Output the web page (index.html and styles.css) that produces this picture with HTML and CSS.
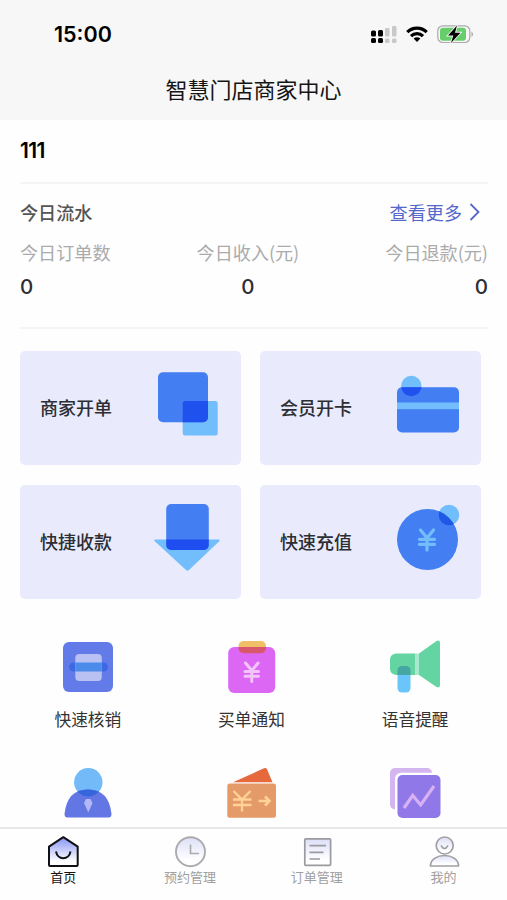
FILE: index.html
```html
<!DOCTYPE html>
<html lang="zh-CN">
<head>
<meta charset="utf-8">
<title>智慧门店商家中心</title>
<link rel="stylesheet" href="styles.css">
</head>
<body>
<header class="header">
  <div class="status">
    <span class="time">15:00</span>
    <svg class="status-icons" width="104" height="24" viewBox="370 22 104 24">
      <g fill="#000"><rect x="371" y="30.500" width="5" height="6" rx="1.500"/><rect x="378" y="30" width="5" height="6.500" rx="1.500"/><rect x="371" y="38" width="5" height="5" rx="1.500"/><rect x="378" y="38" width="5" height="5" rx="1.500"/></g>
      <g fill="#c9c9c9"><rect x="385" y="28" width="4.500" height="8.500" rx="1"/><rect x="392" y="26" width="4.500" height="10.500" rx="1"/><rect x="385" y="38.500" width="4.500" height="4.500" rx="1.200"/><rect x="392" y="38.500" width="4.500" height="4.500" rx="1.200"/></g>
      <g fill="none" stroke="#000" stroke-width="3.200"><path d="M407.300 32.200a13.800 13.800 0 0 1 19.400 0"/><path d="M411 36.200a8.500 8.500 0 0 1 12 0"/></g>
      <path d="M417 42l-3.400-3.400a4.900 4.900 0 0 1 6.800 0z" fill="#000"/>
      <rect x="437.800" y="25.800" width="32" height="16.700" rx="5" fill="#f7f7f7" stroke="#aaa" stroke-width="1.200"/>
      <rect x="440" y="27.700" width="26" height="13" rx="3" fill="#68ce6c"/>
      <path d="M471.500 31.500q3 2.700 0 5.500z" fill="#aaa"/>
      <path d="M457 25.500l-9 10h5.300l-2.300 7.500 9.500-10.300H455z" fill="#000" stroke="#f7f7f7" stroke-width="1.800" paint-order="stroke"/>
    </svg>
  </div>
  <h1 class="title">智慧门店商家中心</h1>
</header>

<main class="main">
  <section class="summary">
    <div class="store">111</div>
    <div class="flow-head">
      <span class="flow-title">今日流水</span>
      <a class="more">查看更多<svg width="12" height="20" viewBox="0 0 12 20"><path d="M1.500 2l8 8-8 8" fill="none" stroke="#5468cc" stroke-width="1.800"/></svg></a>
    </div>
    <div class="stats">
      <div class="stat"><span>今日订单数</span><b>0</b></div>
      <div class="stat stat-mid"><span>今日收入(元)</span><b>0</b></div>
      <div class="stat stat-end"><span>今日退款(元)</span><b>0</b></div>
    </div>
  </section>

  <section class="cards">
    <div class="card"><span>商家开单</span>
      <svg width="80" height="80" viewBox="0 0 80 80">
        <clipPath id="sq"><rect x="8" y="4.300" width="50" height="50" rx="5"/></clipPath>
        <rect x="32.700" y="33" width="35" height="34.500" rx="2.500" fill="#72bdfb"/>
        <rect x="8" y="4.300" width="50" height="50" rx="5" fill="#437ef2"/>
        <rect x="32.700" y="33" width="35" height="34.500" rx="2.500" fill="#1e51ee" clip-path="url(#sq)"/>
      </svg></div>
    <div class="card"><span>会员开卡</span>
      <svg width="80" height="80" viewBox="0 0 80 80">
        <clipPath id="cd"><rect x="7" y="19.300" width="62" height="45.200" rx="5"/></clipPath>
        <circle cx="21.300" cy="18" r="10.200" fill="#72bdfb"/>
        <rect x="7" y="19.300" width="62" height="45.200" rx="5" fill="#437ef2"/>
        <circle cx="21.300" cy="18" r="10.200" fill="#1e51ee" clip-path="url(#cd)"/>
        <rect x="7" y="34.500" width="62" height="6.700" fill="#72bdfb"/>
      </svg></div>
    <div class="card"><span>快捷收款</span>
      <svg width="80" height="80" viewBox="0 0 80 80">
        <clipPath id="ar"><rect x="16.200" y="2" width="42.600" height="46" rx="5"/></clipPath>
        <path d="M5.500 37.500h63q2 .4.700 1.800L39 68q-1.500 1.300-3 0L4.800 39.300q-1.300-1.400.7-1.800z" fill="#72bdfb"/>
        <rect x="16.200" y="2" width="42.600" height="46" rx="5" fill="#437ef2"/>
        <rect x="16.200" y="37.500" width="42.600" height="10.500" fill="#1e4df0" clip-path="url(#ar)"/>
      </svg></div>
    <div class="card"><span>快速充值</span>
      <svg width="80" height="80" viewBox="0 0 80 80">
        <clipPath id="co"><circle cx="37.500" cy="37.500" r="30.500"/></clipPath>
        <circle cx="59" cy="13" r="10.300" fill="#72bdfb"/>
        <circle cx="37.500" cy="37.500" r="30.500" fill="#437ef2"/>
        <circle cx="59" cy="13" r="10.300" fill="#1e58e6" clip-path="url(#co)"/>
        <path d="M30.500 28l6.500 8 6.500-8M29.500 37.300h15M29.500 42.300h15M37 36v12" fill="none" stroke="#72bdfb" stroke-width="3.300" stroke-linecap="round"/>
      </svg></div>
  </section>

  <section class="services">
    <div class="service">
      <svg width="60" height="60" viewBox="0 0 60 60">
        <rect x="5" y="5" width="50" height="50" rx="6" fill="#637be9"/>
        <rect x="11" y="25.500" width="39" height="9" rx="4.500" fill="#3e69e3"/>
        <rect x="17.300" y="17" width="26.500" height="27" rx="4" fill="#b9c0f2"/>
        <rect x="17.300" y="25.500" width="26.500" height="9" fill="#4b8bea"/>
      </svg><span>快速核销</span></div>
    <div class="service">
      <svg width="60" height="60" viewBox="0 0 60 60">
        <clipPath id="bl"><rect x="7.200" y="10" width="47" height="46" rx="6"/></clipPath>
        <rect x="17.500" y="4" width="27.500" height="12.300" rx="5" fill="#f1bf68"/>
        <rect x="7.200" y="10" width="47" height="46" rx="6" fill="#dd67f5"/>
        <rect x="17.500" y="4" width="27.500" height="12.300" rx="5" fill="#d9576c" clip-path="url(#bl)"/>
        <path d="M24.500 26l6.300 7.500 6.300-7.500M24 34.500h13.500M24 39.300h13.500M30.800 33v11.500" fill="none" stroke="#f3c4f8" stroke-width="3" stroke-linecap="round"/>
      </svg><span>买单通知</span></div>
    <div class="service">
      <svg width="60" height="60" viewBox="0 0 60 60">
        <clipPath id="mg"><rect x="5" y="16.500" width="26" height="21.500" rx="6"/></clipPath>
        <rect x="12.500" y="29" width="13" height="26.500" rx="4.500" fill="#69c5fa"/>
        <path d="M11 16.500h19.500V38H11q-6-1-6-6V22.500q0-5 6-6z" fill="#63d4a2"/>
        <rect x="30.500" y="16.500" width="3.500" height="21.500" fill="#a8e8cc"/>
        <path d="M34 16.500L51.500 4q3.500-1.500 3.500 2v42q0 3.500-3.500 2L34 38z" fill="#63d4a2"/>
        <rect x="12.500" y="29" width="13" height="26.500" rx="4.500" fill="#46a6a3" clip-path="url(#mg)"/>
      </svg><span>语音提醒</span></div>
    <div class="service">
      <svg width="60" height="60" viewBox="0 0 60 60">
        <clipPath id="bd"><path d="M6.500 50Q9 25.500 30 25.500T53.500 50q0 3.500-3 3.500h-41q-3 0-3-3.500z"/></clipPath>
        <circle cx="30.300" cy="18.200" r="14.200" fill="#72bbf8"/>
        <path d="M6.500 50Q9 25.500 30 25.500T53.500 50q0 3.500-3 3.500h-41q-3 0-3-3.500z" fill="#6277e3"/>
        <circle cx="30.300" cy="18.200" r="14.200" fill="#3765dc" clip-path="url(#bd)"/>
        <path d="M28 35h4.500l2 4-4.200 9.500L26 39z" fill="#b2b9f6"/>
      </svg></div>
    <div class="service">
      <svg width="60" height="60" viewBox="0 0 60 60">
        <path d="M12 18.200L43 4.300q2-.8 3 1l5.500 12.900z" fill="#e6683d"/>
        <rect x="6.300" y="19.500" width="48.700" height="34.300" rx="2.500" fill="#e59a6a"/>
        <path d="M12.500 27l8.500 8.500 8.500-8.500M12 35.500h18.500M12 41h18.500M21 35v12.500" fill="none" stroke="#ffd298" stroke-width="2.300"/>
        <path d="M37.500 37h10M44 32.500l4.500 4.500-4.500 4.500" fill="none" stroke="#ffd298" stroke-width="2.700"/>
      </svg></div>
    <div class="service">
      <svg width="60" height="60" viewBox="0 0 60 60">
        <rect x="5" y="4" width="42" height="41.500" rx="5" fill="#d3b5ef"/>
        <rect x="10" y="8.700" width="48" height="48" rx="6" fill="#fff"/>
        <rect x="12.500" y="11" width="43" height="43" rx="5" fill="#9078e9"/>
        <path d="M19 44l8.700-12.500L35.700 41 49 22" fill="none" stroke="#d7b1f3" stroke-width="3.200"/>
      </svg></div>
  </section>
</main>

<nav class="tabs">
  <a class="tab active">
    <svg width="36" height="36" viewBox="0 0 36 36">
      <linearGradient id="g1" x2="0" y2="1"><stop stop-color="#8794f4"/><stop offset=".85" stop-color="#fff"/></linearGradient>
      <path d="M18.300 4.200L32.700 13.700V32q0 1-1 1H5q-1 0-1-1V13.700z" fill="url(#g1)" stroke="#101015" stroke-width="2" stroke-linejoin="round"/>
      <path d="M11 18.500c1.500 9 13 9 14.500 0" fill="none" stroke="#101015" stroke-width="2"/>
    </svg><span>首页</span></a>
  <a class="tab">
    <svg width="36" height="36" viewBox="0 0 36 36">
      <linearGradient id="g2" x2="0" y2="1"><stop stop-color="#dcdff8"/><stop offset=".8" stop-color="#fff"/></linearGradient>
      <circle cx="18.500" cy="18.700" r="14.500" fill="url(#g2)" stroke="#ababaf" stroke-width="1.900"/>
      <path d="M18.500 11.500V20.500H27" fill="none" stroke="#ababaf" stroke-width="1.700"/>
    </svg><span>预约管理</span></a>
  <a class="tab">
    <svg width="36" height="36" viewBox="0 0 36 36">
      <rect x="5.800" y="5.800" width="25.800" height="26.500" rx="1" fill="url(#g2)" stroke="#9b9b9f" stroke-width="1.700"/>
      <path d="M10.500 12.700h16.500M10.500 19.300h14M10.500 26h10.500" stroke="#9b9b9f" stroke-width="1.700"/>
    </svg><span>订单管理</span></a>
  <a class="tab">
    <svg width="36" height="36" viewBox="0 0 36 36">
      <path d="M4.500 33c0-14 28-14 28 0z" fill="url(#g2)" stroke="#a0a0a4" stroke-width="1.700" stroke-linejoin="round"/>
      <circle cx="18.700" cy="12.500" r="8.500" fill="url(#g2)" stroke="#a0a0a4" stroke-width="1.700"/>
      <path d="M15 12.500q3.500 6 7 0" fill="none" stroke="#a0a0a4" stroke-width="1.600"/>
    </svg><span>我的</span></a>
</nav>
</body>
</html>
```
FILE: styles.css
```css
* { box-sizing: border-box; }
body {
  margin: 0;
  height: 900px;
  display: flex;
  flex-direction: column;
  overflow: hidden;
  background: #fefefe;
  font-family: Inter, "Noto Sans CJK SC", sans-serif;
  color: #2d2e33;
}
svg { display: block; flex: none; }
.header { height: 120px; flex: none; background: #f7f7f7; }
.status {
  height: 68px;
  padding: 0 33px 0 54px;
  display: flex;
  align-items: center;
  justify-content: space-between;
}
.time { font-size: 21.5px; font-weight: 600; color: #000; }
.title {
  margin: 0;
  font-size: 22px;
  line-height: 44px;
  font-weight: 400;
  text-align: center;
  color: #151515;
}
.main { flex: 1; min-height: 0; overflow: hidden; }
.summary {
  height: 209px;
  margin: 0 19px 0 20px;
  border-bottom: 2px solid #f5f5f6;
}
.store {
  height: 64px;
  line-height: 62px;
  border-bottom: 2px solid #f5f5f6;
  font-size: 21px;
  font-weight: 600;
  letter-spacing: -0.6px;
  color: #000;
}
.flow-head {
  height: 55px;
  padding-right: 7px;
  display: flex;
  align-items: center;
  justify-content: space-between;
  font-size: 18.1px;
}
.flow-title { font-weight: 500; color: #555; }
.more { display: flex; align-items: center; gap: 7px; color: #5468cc; }
.stats { display: flex; justify-content: space-between; }
.stat { display: flex; flex-direction: column; line-height: 26px; }
.stat span { font-family: "Noto Sans CJK SC", sans-serif; font-size: 18.1px; color: #ababab; }
.stat b { margin-top: 9px; font-size: 20.5px; font-weight: 500; }
.stat-mid { text-align: center; }
.stat-end { text-align: right; }
.cards {
  padding: 22px 26px 0 20px;
  display: grid;
  grid-template-columns: 1fr 1fr;
  grid-auto-rows: 114px;
  gap: 20px 19px;
}
.card {
  padding: 0 11px 0 20px;
  display: flex;
  align-items: center;
  justify-content: space-between;
  border-radius: 5px;
  background: #e9ebfd;
  font-size: 18px;
  font-weight: 500;
}
.card span { padding-bottom: 2px; }
.services {
  padding: 38px 10px 0 6px;
  display: grid;
  grid-template-columns: repeat(3, 1fr);
  row-gap: 32px;
}
.service {
  display: flex;
  flex-direction: column;
  align-items: center;
  gap: 11px;
  font-size: 16.7px;
  line-height: 24px;
  color: #333;
}
.tabs {
  height: 73px;
  flex: none;
  border-top: 2px solid #e7e8e9;
  display: grid;
  grid-template-columns: repeat(4, 1fr);
  background: #fefefe;
}
.tab {
  padding-top: 4px;
  display: flex;
  flex-direction: column;
  align-items: center;
  font-size: 13px;
  line-height: 17px;
  color: #a0a0a0;
}
.active { color: #151515; }
```
